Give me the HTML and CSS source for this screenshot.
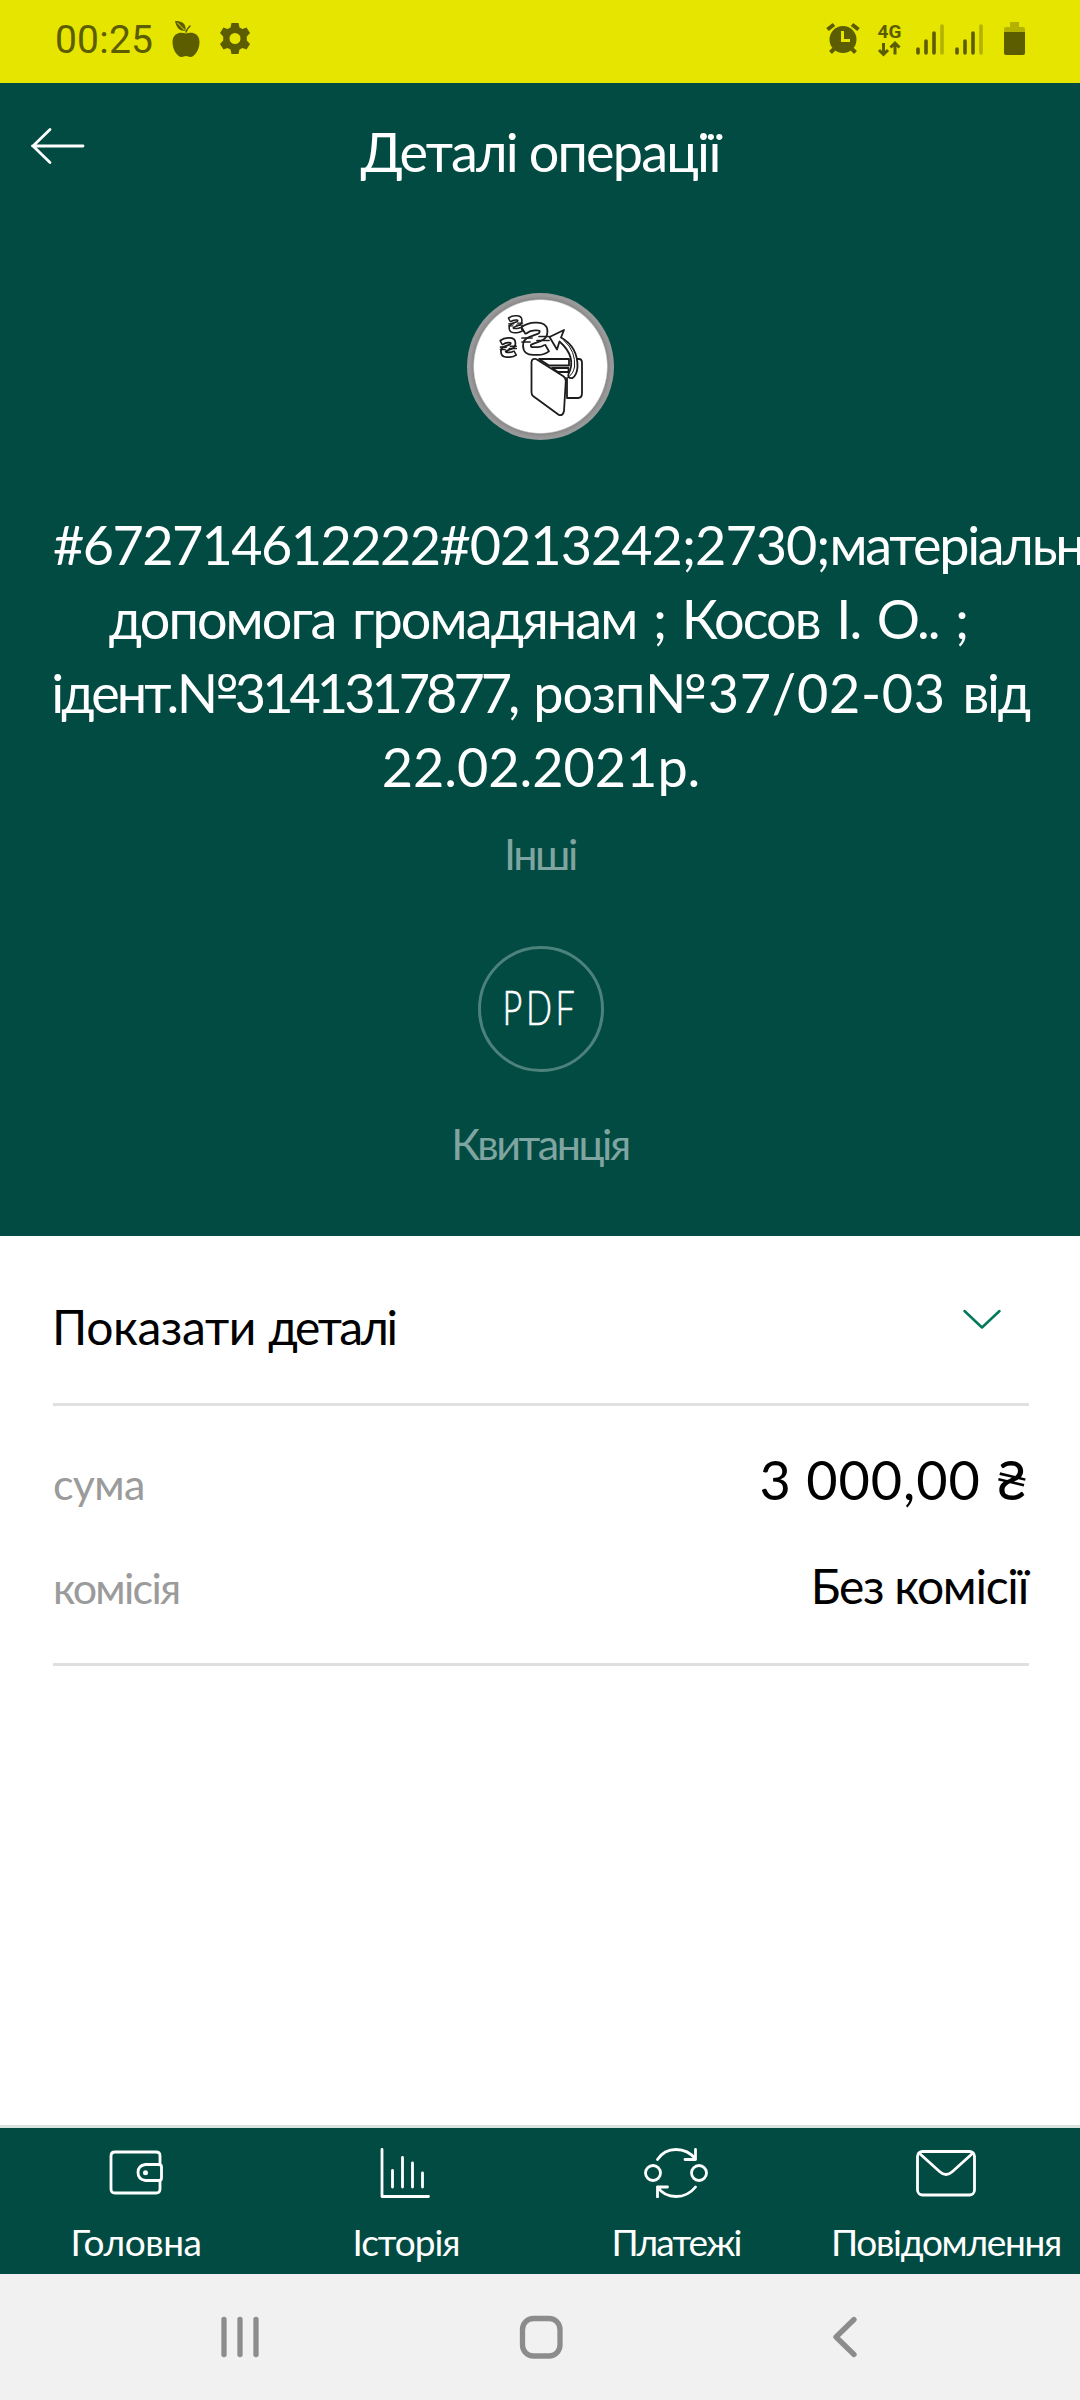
FILE: index.html
```html
<!DOCTYPE html>
<html lang="uk">
<head>
<meta charset="utf-8">
<title>Деталі операції</title>
<link rel="stylesheet" href="styles.css">
</head>
<body>
<div class="status">
  <span class="clock">00:25</span>
  <svg class="apple" width="28" height="83" viewBox="171.500 0 28 83">
    <path d="M185.500 33.500C180 31.500 172 33 172 42C172 50 177 57 181 57C183 57 184 56 185.500 56C187 56 188 57 190 57C194 57 199 50 199 42C199 33 191 31.500 185.500 33.500Z"/>
    <path d="M174.500 21C181 21 186 23 185 31C179 31 176 28 174.500 21Z"/>
    <path class="vein" d="M177 23L184 30"/>
    <path class="stem" d="M185.500 32Q186.500 28.500 189.500 26"/>
  </svg>
  <svg width="32" height="83" viewBox="219 0 32 83">
    <path fill-rule="evenodd" d="M231.500 23H238.500L239.500 27.500L242.500 29L246.500 27.500L250 33L246.800 36.500V40.500L250 44L246.500 49.500L242.500 48L239.500 49.500L238.500 54H231.500L230.500 49.500L227.500 48L223.500 49.500L220 44L223.200 40.500V36.500L220 33L223.500 27.500L227.500 29L230.500 27.500ZM235 33A5.500 5.500 0 1 0 235 44A5.500 5.500 0 1 0 235 33Z"/>
  </svg>
  <svg class="alarm" width="34" height="83" viewBox="826 0 34 83">
    <circle cx="843" cy="39.500" r="13.500"/>
    <path class="thick" d="M827.500 29.500L834 24.500M858.500 29.500L852 24.500"/>
    <path class="thick" d="M834 49L830.500 52.500M852 49L855.500 52.500"/>
    <path class="hands" d="M842.500 31V40.500H850"/>
  </svg>
  <svg class="lte" width="26" height="83" viewBox="877 0 26 83">
    <text x="877.500" y="37.500">4G</text>
    <path class="arrows" d="M883.500 43V54M879 50L883.500 54.500L888 50M895 54.500V44M890.500 47.500L895 43L899.500 47.500"/>
  </svg>
  <svg class="signal" width="28" height="83" viewBox="915.500 0 28 83">
    <path d="M917.500 49V53M925.500 41V53M933.500 33V53"/><path class="off" d="M941.500 26V53"/>
  </svg>
  <svg class="signal second" width="28" height="83" viewBox="915.500 0 28 83">
    <path d="M917.500 49V53M925.500 41V53M933.500 33V53"/><path class="off" d="M941.500 26V53"/>
  </svg>
  <svg class="battery" width="22" height="83" viewBox="1004 0 22 83">
    <path class="dim" d="M1010 22H1019V27H1023Q1025 27 1025 29V33H1004V29Q1004 27 1006 27H1010Z"/>
    <path d="M1004 32H1025V53Q1025 55 1023 55H1006Q1004 55 1004 53Z"/>
  </svg>
</div>

<main class="hero">
  <header class="appbar">
    <svg class="back" width="54" height="38" viewBox="0 0 54 38"><path d="M1.500 19H52M19 2.500L2 19L19 35.500"/></svg>
    <h1>Деталі операції</h1>
  </header>

  <div class="avatar">
    <svg width="147" height="147" viewBox="27 23 147 147">
      <defs>
        <path id="hryvnia" d="M83.500 60.500Q89 56.500 95 56.500H97Q103.500 56.500 103.500 61V62Q103.500 66 99 67.500L91 70.500Q87 72 87 75V76Q87 81 93 81H98Q103 81 107 78"/>
      </defs>
      <g class="ink">
        <path d="M99 89H129V95.500H109Z"/>
        <path d="M112 98H128.500V102H118Z"/>
        <path d="M137 89H139Q142 89 142 93V123Q142 128 138 128H127V108"/>
        <path d="M91.500 92Q92 88 96 89L123 106Q126 108 125.800 111L124 141Q123 146 119 145L93 126Q91.500 125 91.500 122Z"/>
        <path d="M109.500 67L124 60L121 67.500Q138 77 137.500 97Q137 105 132.500 108Q127 108.500 128.500 104Q137 87 119.500 71.500L117 79.500Z"/>
        <path d="M124 70.500Q136 81 134.500 97Q133 104 129.500 106"/>
      </g>
      <g class="big"><use class="edge" href="#hryvnia"/><use class="fill" href="#hryvnia"/><path class="cap" d="M81.700 57.500L85.300 63.700M105.200 74.800L108.800 81"/><path class="bar" d="M82 68H92M99 66.500H109M82 72H90M97 70.500H109"/></g>
      <g class="small" transform="translate(26 18.500) scale(.52)"><use class="edge" href="#hryvnia"/><use class="fill" href="#hryvnia"/><path class="cap" d="M81.700 57.500L85.300 63.700M105.200 74.800L108.800 81"/><path class="bar" d="M82 68H92M99 66.500H109M82 72H90M97 70.500H109"/></g>
      <g class="small" transform="translate(12 37) scale(.59)"><use class="edge" href="#hryvnia"/><use class="fill" href="#hryvnia"/><path class="cap" d="M81.700 57.500L85.300 63.700M105.200 74.800L108.800 81"/><path class="bar" d="M82 68H92M99 66.500H109M82 72H90M97 70.500H109"/></g>
    </svg>
  </div>

  <p class="desc">
    <span class="line l1"><span class="account">#672714612222</span><span class="digits">#0213242;2730;</span><span class="word">матеріальн</span></span>
    <span class="line l2">допомога громадянам ; Косов І. О.. ;</span>
    <span class="line l3"><span class="ident">ідент.</span><span class="code">№3141317877,</span> <span class="order">розп</span><span class="number">№37/02-03</span> <span class="from">від</span></span>
    <span class="line l4">22.02.2021р.</span>
  </p>
  <p class="category">Інші</p>
  <div class="pdf">
    <svg width="120" height="120" viewBox="0 0 120 120"><text x="21.500" y="75.500" textLength="76" lengthAdjust="spacingAndGlyphs">PDF</text></svg>
  </div>
  <p class="receipt">Квитанція</p>
</main>

<section class="details">
  <div class="toggle">
    <span class="show"><span class="verb">Показати</span> <span class="noun">деталі</span></span>
    <svg width="38" height="22" viewBox="0 0 38 22"><path d="M1.500 2L19 18.500L36.500 2"/></svg>
  </div>
  <div class="rows">
    <div class="row"><span class="key sum">сума</span><span class="amount">3 000,00 ₴</span></div>
    <div class="row second"><span class="key fee">комісія</span><span class="nofee">Без комісії</span></div>
  </div>
</section>

<nav class="tabs">
  <div class="tab">
    <svg width="64" height="50" viewBox="0 0 64 50"><path d="M56 17V8Q56 4 52 4H11Q7 4 7 8V41Q7 45 11 45H52Q56 45 56 41V33M41.500 16.500H55Q57.500 16.500 57.500 19V30Q57.500 32.500 55 32.500H41.500Q34 31.500 34 24.500Q34 17.500 41.500 16.500Z"/><circle class="dot" cx="41.500" cy="24.700" r="2.500"/></svg>
    <span class="t1">Головна</span>
  </div>
  <div class="tab">
    <svg width="64" height="50" viewBox="0 0 64 50"><path d="M8 1.500V48.500H54.500M18.500 22.500V39M28.500 9.500V39M38.500 15V39M48.500 25V39"/></svg>
    <span class="t2">Історія</span>
  </div>
  <div class="tab">
    <svg width="64" height="50" viewBox="0 0 64 50"><circle cx="9" cy="25" r="7.500"/><circle cx="55" cy="25" r="7.500"/><path d="M13.500 11.500Q20 1.500 32 1.500Q44 1.500 51.500 11M51.500 1.500V11.500H41M51.500 39Q44 48.500 32 48.500Q20 48.500 13.500 39M13.500 49V39H23.500"/></svg>
    <span class="t3">Платежі</span>
  </div>
  <div class="tab">
    <svg width="64" height="50" viewBox="0 0 64 50"><rect x="3.500" y="3.500" width="57" height="43.500" rx="5"/><path d="M5 5L25.500 23.500Q32 29.500 38.500 23.500L59 5"/></svg>
    <span class="t4">Повідомлення</span>
  </div>
</nav>

<div class="sysnav">
  <svg width="40" height="42" viewBox="0 0 40 42"><path d="M4 3.500V38.500M20 3.500V38.500M36 3.500V38.500"/></svg>
  <svg class="home" width="44" height="44" viewBox="0 0 44 44"><rect x="3.500" y="3.500" width="37.500" height="37.500" rx="11"/></svg>
  <svg width="26" height="42" viewBox="0 0 26 42"><path d="M22 3.500L4 21L22 38.500"/></svg>
</div>
</body>
</html>
```
FILE: styles.css
```css
* { box-sizing: border-box; }
body {
  margin: 0;
  width: 1080px;
  height: 2400px;
  overflow: hidden;
  display: flex;
  flex-direction: column;
  background: #fff;
  color: #000;
  font-family: Lato, "Open Sans", sans-serif;
}
h1, p { margin: 0; font-weight: 400; }
svg { display: block; flex: none; fill: none; stroke-linecap: round; stroke-linejoin: round; }

/* Status bar */
.status {
  height: 83px;
  flex: none;
  display: flex;
  padding: 0 54px 0 55px;
  background: #e6e500;
  color: #5c5c00;
  font-family: Roboto, sans-serif;
}
.status svg { fill: #5c5c00; }
.clock { width: 116.5px; font-size: 39px; line-height: 81px; letter-spacing: .2px; }
.apple { margin-right: 19.5px; }
.status .vein { stroke: #e6e500; stroke-width: 1; }
.status .stem { stroke: #5c5c00; stroke-width: 1.6; fill: none; }
.alarm { margin-left: auto; margin-right: 17px; }
.thick { stroke: #5c5c00; stroke-width: 4; stroke-linecap: butt; }
.hands { stroke: #e6e500; stroke-width: 3; fill: none; stroke-linecap: butt; stroke-linejoin: miter; }
.lte { margin-right: 12.5px; }
.lte text { font: 700 19px Roboto, sans-serif; }
.arrows { stroke: #5c5c00; stroke-width: 3; fill: none; stroke-linecap: butt; stroke-linejoin: miter; }
.signal { stroke: #5c5c00; stroke-width: 3.6; }
.signal .off { stroke: #b3b200; }
.signal.second { margin-left: 11px; }
.battery { margin-left: 21.5px; }
.battery .dim { fill: #b3b200; }

/* Green header area */
.hero {
  height: 1153px;
  flex: none;
  display: flex;
  flex-direction: column;
  align-items: center;
  background: #024b43;
  color: #fff;
  overflow: hidden;
}
.appbar {
  width: 100%;
  height: 134px;
  display: grid;
  grid-template-columns: 120px 1fr 120px;
  align-items: center;
  text-align: center;
}
.back { margin: 0 0 8px 31px; stroke: #fff; stroke-width: 2.8; }
h1 { padding-top: 3px; font-size: 54px; line-height: 74px; letter-spacing: -1.84px; white-space: nowrap; }
.avatar {
  width: 147px;
  height: 147px;
  margin: 76px 0 68px 1px;
  flex: none;
  border-radius: 50%;
  background: radial-gradient(circle at 50% 50%, #fff 66px, #8a8a8a 67.5px, #999 71px);
}
.ink path { fill: #fff; stroke: #1c1c1c; stroke-width: 1.8; }
.ink path:last-child { fill: none; stroke-width: 1; }
.edge { stroke: #1c1c1c; stroke-width: 9.6; stroke-linecap: butt; }
.fill { stroke: #fff; stroke-width: 6; stroke-linecap: butt; }
.bar, .cap { stroke: #1c1c1c; stroke-width: 1.7; }
.small .edge { stroke-width: 11; }
.small .fill { stroke-width: 5; }
.small .bar, .small .cap { stroke-width: 2.6; }
.desc { width: 100%; font-size: 54px; line-height: 74px; text-align: center; }
.line { display: block; white-space: nowrap; }
.l1 { text-align: left; padding-left: 53px; }
.account { letter-spacing: -1.6px; }
.digits { letter-spacing: -1px; }
.word { letter-spacing: -2.3px; }
.l2 { letter-spacing: -1.9px; word-spacing: 4.6px; padding-right: 4px; }
.l3 { word-spacing: 3px; }
.ident { letter-spacing: -2.9px; }
.code { letter-spacing: -4px; }
.order { letter-spacing: -.9px; }
.number { letter-spacing: .7px; }
.from { letter-spacing: -2.3px; }
.l4 { padding-left: 2px; letter-spacing: -.03px; }
.category, .receipt { font-size: 43px; line-height: 52px; letter-spacing: -2.4px; color: #80a5a1; }
.category { margin-top: 24px; }
.pdf {
  width: 126px;
  height: 126px;
  flex: none;
  margin: 66px 0 46px 1px;
  border: 3px solid #4d817b;
  border-radius: 50%;
}
.pdf svg { overflow: visible; }
.pdf text { fill: #fff; stroke: #fff; stroke-width: .6px; font-size: 47px; font-weight: 300; letter-spacing: 5px; }

/* Operation details */
.details { padding: 0 51px 0 53px; }
.toggle {
  display: flex;
  justify-content: space-between;
  padding: 62px 28px 47px 0;
  border-bottom: 3px solid #e0e0e0;
}
.toggle svg { margin-top: 11px; stroke: #017a5c; stroke-width: 2.5; }
.show { margin-left: -1px; font-size: 48px; line-height: 58px; }
.verb { letter-spacing: -.4px; }
.noun { letter-spacing: -2.4px; }
.rows { padding: 41px 0 46px; border-bottom: 3px solid #e0e0e0; }
.row { display: flex; justify-content: space-between; align-items: baseline; line-height: 58px; }
.row.second { margin-top: 44px; }
.key { font-size: 43px; color: #9b9b9b; }
.sum { letter-spacing: -.68px; }
.fee { letter-spacing: -1.71px; }
.amount { font-size: 54px; line-height: 66px; letter-spacing: .91px; }
.nofee { font-size: 48px; letter-spacing: -1.3px; padding-right: 1px; }

/* Tab bar */
.tabs {
  margin-top: auto;
  height: 149px;
  flex: none;
  display: grid;
  grid-template-columns: repeat(4, 270px);
  border-top: 3px solid #dbe3e2;
  background: #024b43;
  color: #fff;
}
.tab { display: flex; flex-direction: column; align-items: center; padding: 20px 0 0 2px; font-size: 37px; line-height: 44px; }
.tab svg { margin-bottom: 22px; stroke: #fff; stroke-width: 2.8; }
.tab .dot { fill: #fff; stroke: none; }
.t1 { letter-spacing: -.46px; }
.t2 { letter-spacing: -1px; }
.t3 { letter-spacing: -1.82px; }
.t4 { letter-spacing: -1.3px; }

/* System navigation */
.sysnav {
  height: 126px;
  flex: none;
  display: grid;
  grid-template-columns: 1fr 44px 1fr;
  align-items: center;
  padding: 0 222px 0 220px;
  background: #f1f1f1;
}
.sysnav svg { stroke: #8c8c8c; stroke-width: 5.3; }
.sysnav .home { margin-left: 2px; }
.sysnav svg:last-child { justify-self: end; }
```
